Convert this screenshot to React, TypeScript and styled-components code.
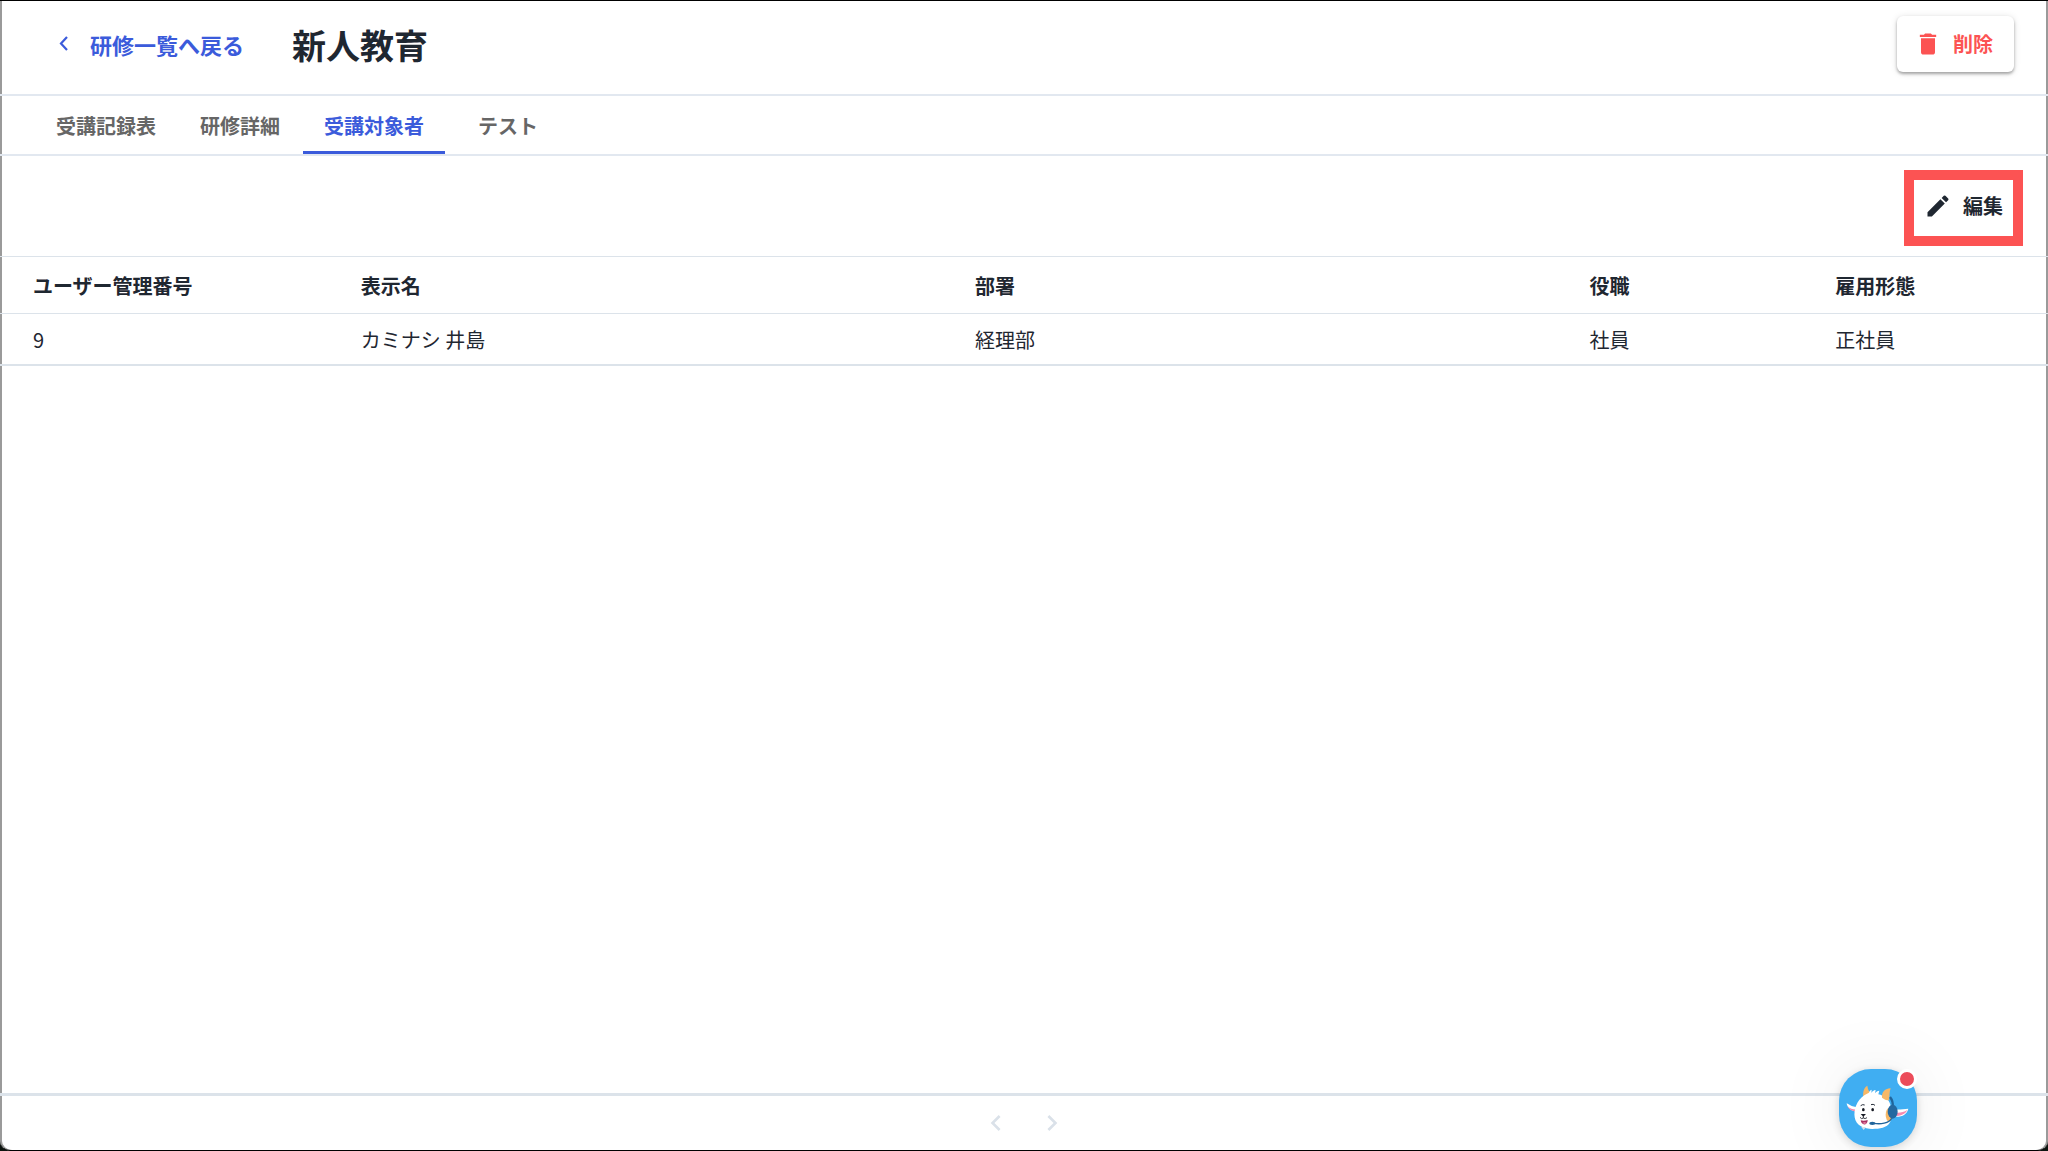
import React from "react";
import styled, { createGlobalStyle } from "styled-components";

const color = {
  ink: "#1f2731",
  muted: "#666666",
  primary: "#3b5bdb",
  danger: "#fc5353",
  line: "#e2e8f0",
  lineStrong: "#dce3ea",
};

const GlobalStyle = createGlobalStyle`
  *, *::before, *::after { box-sizing: border-box; }
  body {
    margin: 0;
    background: #0c140f;
    color: ${color.ink};
    font-family: "Noto Sans CJK JP", "Noto Sans", sans-serif;
    font-size: 20px;
    line-height: 28px;
  }
  button { font: inherit; color: inherit; background: none; border: 0; padding: 0; cursor: pointer; }
`;

const Page = styled.div`
  display: flex;
  flex-direction: column;
  min-height: 100vh;
  background: #fff;
  border-top: 1px solid #000;
  border-bottom: 1px solid #000;
  border-radius: 0 0 10px 10px;
  box-shadow: inset 2px 0 0 #9a9a9a, inset -2px 0 0 #9a9a9a;
`;

const Header = styled.header`
  display: flex;
  align-items: flex-start;
  justify-content: space-between;
  height: 95px;
  padding: 15px 34px 0 50px;
  border-bottom: 2px solid ${color.line};
`;

const Heading = styled.div`
  display: flex;
  align-items: center;
  height: 57px;
  gap: 48px;
`;

const BackLink = styled.a`
  display: flex;
  align-items: center;
  gap: 10px;
  padding-bottom: 2px;
  color: ${color.primary};
  font-size: 22px;
  font-weight: 700;
  text-decoration: none;
`;

const Title = styled.h1`
  margin: 0;
  font-size: 34px;
  line-height: 48px;
  font-weight: 700;
`;

const Icon = styled.svg<{ $size?: number }>`
  display: block;
  flex: none;
  width: ${(p) => p.$size ?? 28}px;
  height: ${(p) => p.$size ?? 28}px;
  fill: currentColor;
`;

const ActionButton = styled.button<{ $danger?: boolean }>`
  display: flex;
  align-items: center;
  gap: 11px;
  height: 56px;
  padding: ${(p) => (p.$danger ? "0 21px 0 17px" : "0 10px 4px 10px")};
  font-weight: 700;
  color: ${(p) => (p.$danger ? color.danger : color.ink)};
  background: #fff;
  border-radius: ${(p) => (p.$danger ? "6px" : "0")};
  box-shadow: ${(p) =>
    p.$danger ? "0 2px 3px rgba(0,0,0,.3), 0 1px 7px rgba(0,0,0,.13)" : "none"};
`;

const Tabs = styled.nav`
  display: flex;
  height: 60px;
  padding-left: 35px;
  border-bottom: 2px solid ${color.line};
`;

const Tab = styled.button<{ $active?: boolean }>`
  min-width: 126px;
  padding: 4px 21px 0;
  font-weight: 700;
  color: ${(p) => (p.$active ? color.primary : color.muted)};
  border-bottom: 3px solid ${(p) => (p.$active ? color.primary : "transparent")};
`;

const Toolbar = styled.div`
  display: flex;
  justify-content: flex-end;
  padding: 14px 25px 10px;
  border-bottom: 1px solid ${color.lineStrong};
`;

const Highlight = styled.div`
  border: 10px solid ${color.danger};
`;

const Table = styled.table`
  width: 100%;
  table-layout: fixed;
  border-collapse: separate;
  border-spacing: 0;
`;

const HeadCell = styled.th<{ $width: string }>`
  width: ${(p) => p.$width};
  height: 57px;
  padding: 2px 0 0 33px;
  text-align: left;
  font-weight: 700;
  border-bottom: 1px solid ${color.lineStrong};
`;

const Cell = styled.td`
  height: 52px;
  padding: 2px 0 0 33px;
  font-weight: 400;
  border-bottom: 2px solid ${color.lineStrong};
`;

const Content = styled.main`
  flex: 1;
`;

const Footer = styled.footer`
  display: flex;
  align-items: center;
  justify-content: center;
  gap: 24px;
  height: 57px;
  color: #dae1e9;
  border-top: 3px solid ${color.lineStrong};
`;

const ChatButton = styled.button`
  position: fixed;
  right: 131px;
  bottom: 4px;
  width: 78px;
  height: 78px;
  border-radius: 32px;
  background: #40aef2;
  box-shadow: 0 2px 10px rgba(0, 0, 0, 0.16), 0 0 70px rgba(0, 0, 0, 0.08);
`;

const Mascot = styled.svg`
  display: block;
  width: 78px;
  height: 78px;
`;

const Unread = styled.span`
  position: absolute;
  top: 0;
  right: 0;
  width: 20px;
  height: 20px;
  border: 3px solid #fff;
  border-radius: 50%;
  background: #ec4c5a;
`;

const tabs = ["受講記録表", "研修詳細", "受講対象者", "テスト"];

const columns = [
  { label: "ユーザー管理番号", width: "16%" },
  { label: "表示名", width: "30%" },
  { label: "部署", width: "30%" },
  { label: "役職", width: "12%" },
  { label: "雇用形態", width: "12%" },
];

const rows = [["9", "カミナシ 井島", "経理部", "社員", "正社員"]];

const Chevron = ({ direction }: { direction: "left" | "right" }) => (
  <Icon $size={32} viewBox="0 0 24 24" aria-hidden="true">
    {direction === "left" ? (
      <path d="M15.41 7.41 14 6l-6 6 6 6 1.41-1.41L10.83 12z" />
    ) : (
      <path d="M10 6 8.59 7.41 13.17 12l-4.58 4.59L10 18l6-6z" />
    )}
  </Icon>
);

const BackIcon = styled.svg`
  display: block;
  width: 30px;
  height: 30px;
  fill: none;
  stroke: currentColor;
  stroke-width: 2.2;
`;

const Goat = () => (
  <Mascot viewBox="0 0 234 234" aria-hidden="true">
    <path d="M57 115C43 115 32 108 23 103c1 13 14 24 31 25z" fill="#fff" />
    <path d="M55 128c-13 0-25-6-29-16 8 8 19 10 28 9z" fill="#f58ab0" />
    <path d="M164 121c18 1 31-1 44-2-4 17-20 27-43 24z" fill="#fff" />
    <path d="M168 141c17 0 31-6 37-18-10 7-23 9-34 8z" fill="#f58ab0" />
    <path d="M73 84c-2-15 2-29 12-34 1 10 5 17 10 24L91 87z" fill="#f6b867" />
    <path
      d="M47 145c-3-21 5-51 30-67l13-7c1-4 3-7 8-9l-1 10c3-5 7-8 13-9l-2 10c4-5 7-7 13-8l-3 11c18 4 31 14 36 31 5 19 6 40-1 53-9 17-31 20-53 20-24 0-49-9-53-35z"
      fill="#fff"
    />
    <path d="M129 86c-1-16 6-26 26-28-4 10-3 22-5 36-8 0-15-3-21-8z" fill="#f6b867" />
    <ellipse cx="150" cy="137" rx="10" ry="20" fill="#f6b867" />
    <path d="M153 84c8 10 9 18 8 28" fill="none" stroke="#20649b" strokeWidth="7" />
    <ellipse cx="161" cy="128" rx="15" ry="21" fill="#2468a0" />
    <path d="M158 148c-7 16-35 18-54 15" fill="none" stroke="#20649b" strokeWidth="4" />
    <ellipse cx="100" cy="163" rx="9" ry="5" fill="#20649b" />
    <path d="M65 110q6-5 12-2M96 107q7-3 12 2" fill="none" stroke="#222936" strokeWidth="3" />
    <ellipse cx="73" cy="122" rx="4" ry="5" fill="#171a24" />
    <ellipse cx="101" cy="122" rx="4" ry="5" fill="#171a24" />
    <path d="M65 135h16l-8 8z" fill="#171a24" />
    <path d="M73 140v7M63 145q5 7 10 2 5 4 11-1" fill="none" stroke="#171a24" strokeWidth="2.5" />
    <path d="M65 154c7 2 15 1 21-1 0 17-19 18-21 1z" fill="#a93163" />
    <path d="M70 162q7-5 13 0-5 5-13 0z" fill="#f490b2" />
    <path d="M67 174h14l-7 9z" fill="#d4e0ec" />
  </Mascot>
);

export default function App() {
  return (
    <>
      <GlobalStyle />
      <Page>
        <Header>
          <Heading>
            <BackLink href="#">
              <BackIcon viewBox="0 0 30 30" aria-hidden="true">
                <path d="M17 8l-6 6.500 6 6.500" />
              </BackIcon>
              研修一覧へ戻る
            </BackLink>
            <Title>新人教育</Title>
          </Heading>
          <ActionButton type="button" $danger>
            <Icon viewBox="0 0 24 24" aria-hidden="true">
              <path d="M6 19c0 1.100.9 2 2 2h8c1.100 0 2-.9 2-2V7H6zM19 4h-3.500l-1-1h-5l-1 1H5v2h14z" />
            </Icon>
            削除
          </ActionButton>
        </Header>
        <Tabs>
          {tabs.map((label) => (
            <Tab key={label} type="button" $active={label === "受講対象者"}>
              {label}
            </Tab>
          ))}
        </Tabs>
        <Content>
          <Toolbar>
            <Highlight>
              <ActionButton type="button">
                <Icon viewBox="0 0 24 24" aria-hidden="true">
                  <path d="M3 17.250V21h3.750L17.810 9.940l-3.750-3.750zM20.710 7.040c.39-.39.39-1.020 0-1.410l-2.340-2.340a.9959.9959 0 0 0-1.410 0l-1.830 1.830 3.750 3.750z" />
                </Icon>
                編集
              </ActionButton>
            </Highlight>
          </Toolbar>
          <Table>
            <thead>
              <tr>
                {columns.map((column) => (
                  <HeadCell key={column.label} scope="col" $width={column.width}>
                    {column.label}
                  </HeadCell>
                ))}
              </tr>
            </thead>
            <tbody>
              {rows.map((row) => (
                <tr key={row[0]}>
                  {row.map((value, index) => (
                    <Cell key={columns[index].label}>{value}</Cell>
                  ))}
                </tr>
              ))}
            </tbody>
          </Table>
        </Content>
        <Footer>
          <button type="button" aria-label="前のページ">
            <Chevron direction="left" />
          </button>
          <button type="button" aria-label="次のページ">
            <Chevron direction="right" />
          </button>
        </Footer>
      </Page>
      <ChatButton type="button" aria-label="チャットサポート">
        <Goat />
        <Unread />
      </ChatButton>
    </>
  );
}
